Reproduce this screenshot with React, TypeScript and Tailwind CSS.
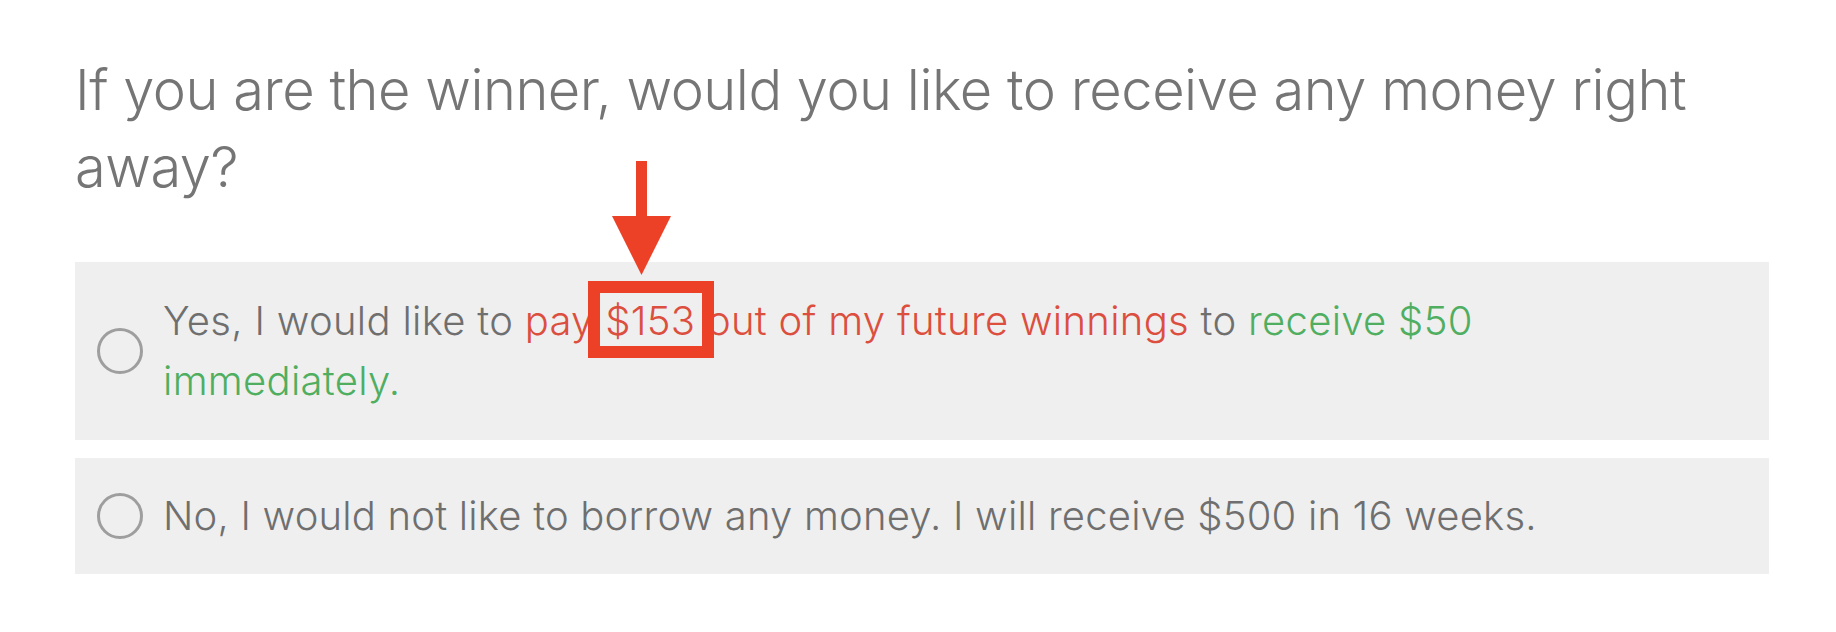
import React from 'react';

function Radio() {
  return <span className="block w-[46px] h-[46px] shrink-0 rounded-full border-[3px] border-[#9e9e9e] bg-transparent" />;
}

function Highlight({ children }: { children: React.ReactNode }) {
  return (
    <span className="relative">
      {children}
      <span className="pointer-events-none absolute -left-[17px] -right-[19px] -top-[15px] -bottom-[13px] border-[12px] border-[#ec4126]">
        <svg
          className="absolute left-[12px] bottom-[calc(100%+18px)]"
          width="60"
          height="114"
          viewBox="0 0 60 114"
        >
          <rect x="24" y="0" width="11" height="56" fill="#ec4126" />
          <polygon points="0,55 59,55 29.5,114" fill="#ec4126" />
        </svg>
      </span>
    </span>
  );
}

export default function App() {
  const font = { fontFamily: 'Inter, Lato, sans-serif' };

  return (
    <div className="w-full h-[632px] bg-white pl-[75px] pr-[67px] pt-[52px]" style={font}>
      <h1 className="max-w-[1660px] text-[56px] leading-[77px] font-light tracking-[-0.5px] text-[#757575]">
        If you are the winner, would you like to receive any money right away?
      </h1>

      <div className="mt-[56px] flex flex-col gap-[18px]">
        <label className="flex items-center gap-[20px] bg-[#efefef] pl-[22px] py-[29px]">
          <Radio />
          <span className="max-w-[1420px] text-[40px] leading-[60px] font-light tracking-[0.3px] text-[#6f6f6f]">
            Yes, I would like to{' '}
            <span className="text-[#dc4e3d]">
              pay <Highlight>$153</Highlight> out of my future winnings
            </span>{' '}
            to <span className="text-[#4fae60]">receive $50 immediately.</span>
          </span>
        </label>

        <label className="flex items-center gap-[20px] bg-[#efefef] pl-[22px] py-[28px]">
          <Radio />
          <span className="text-[40px] leading-[60px] font-light tracking-[0.2px] text-[#6f6f6f]">
            No, I would not like to borrow any money. I will receive $500 in 16 weeks.
          </span>
        </label>
      </div>
    </div>
  );
}
